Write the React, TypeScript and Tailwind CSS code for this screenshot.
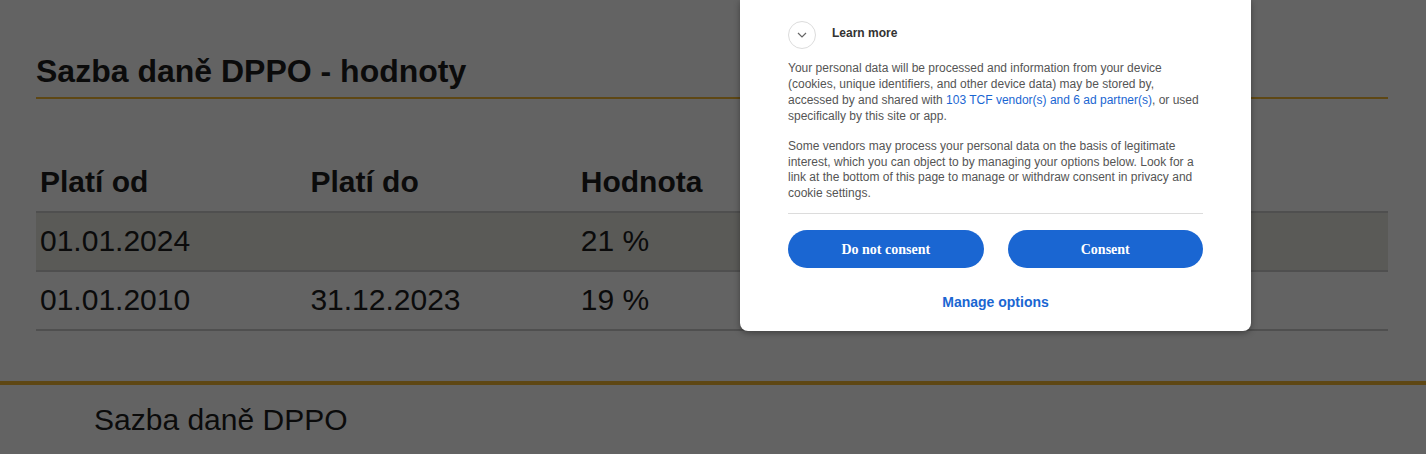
import React from "react";

const rows = [
  { od: "01.01.2024", do: "", val: "21 %", shaded: true },
  { od: "01.01.2010", do: "31.12.2023", val: "19 %", shaded: false },
];

export default function App() {
  return (
    <div
      className="relative w-[1426px] h-[454px] overflow-hidden bg-[#636363] text-[#0b0b0b]"
      style={{ fontFamily: '"Liberation Sans", Arial, sans-serif' }}
    >
      <div className="pl-[36px] pr-[38px] pt-[53px]">
        <h2 className="text-[32px] font-bold leading-[37px] pb-[7px] border-b-2 border-[#5e4714]">
          Sazba daně DPPO - hodnoty
        </h2>
        <div className="mt-[61px]">
          <div className="grid grid-cols-5 h-[53px] border-b-2 border-[#4f4f4f] text-[30px] font-bold leading-[34px]">
            <div className="pl-[4px] pt-[5px]">Platí od</div>
            <div className="pl-[4px] pt-[5px]">Platí do</div>
            <div className="pl-[4px] pt-[5px]">Hodnota</div>
            <div />
            <div />
          </div>
          {rows.map((r, i) => (
            <div
              key={i}
              className={`grid grid-cols-5 h-[59px] border-b-2 border-[#4f4f4f] text-[30px] leading-[34px] ${
                r.shaded ? "bg-[#5a5a57]" : ""
              }`}
            >
              <div className="pl-[4px] pt-[11px]">{r.od}</div>
              <div className="pl-[4px] pt-[11px]">{r.do}</div>
              <div className="pl-[4px] pt-[11px]">{r.val}</div>
              <div />
              <div />
            </div>
          ))}
        </div>
      </div>
      <div className="mt-[50px] border-t-[4px] border-[#5e4714] pl-[94px] pt-[18px] text-[30px] leading-[34px]">
        Sazba daně DPPO
      </div>

      {/* consent dialog */}
      <div className="absolute left-[740px] top-0 w-[511px] h-[331px] bg-white rounded-b-[8px] shadow-[0_2px_6px_rgba(0,0,0,0.35)] px-[48px] pt-[20px]">
        <div className="flex items-center h-[29px]">
          <div className="w-[28px] h-[28px] rounded-full border border-[#dcdcdc] flex items-center justify-center">
            <svg width="10" height="6" viewBox="0 0 10 6" fill="none">
              <path d="M1 1l4 4 4-4" stroke="#666" strokeWidth="1.2" />
            </svg>
          </div>
          <span className="ml-[16px] text-[12px] font-bold text-[#333] -mt-[3px]">Learn more</span>
        </div>
        <p className="mt-[11px] text-[12px] leading-[16px] text-[#555]">
          Your personal data will be processed and information from your device (cookies, unique identifiers, and other device data) may be stored by, accessed by and shared with{" "}
          <span className="text-[#1a66d2]">103 TCF vendor(s) and 6 ad partner(s)</span>, or used specifically by this site or app.
        </p>
        <p className="mt-[15px] text-[12px] leading-[15.5px] text-[#555]">
          Some vendors may process your personal data on the basis of legitimate interest, which you can object to by managing your options below. Look for a link at the bottom of this page to manage or withdraw consent in privacy and cookie settings.
        </p>
        <div className="mt-[12px] border-t border-[#dcdcdc]" />
        <div className="mt-[16px] flex gap-[24px]">
          <button
            className="flex-1 h-[38px] rounded-full bg-[#1a66d2] text-white text-[14px] font-bold"
            style={{ fontFamily: '"Liberation Serif", "Times New Roman", serif' }}
          >
            Do not consent
          </button>
          <button
            className="flex-1 h-[38px] rounded-full bg-[#1a66d2] text-white text-[14px] font-bold"
            style={{ fontFamily: '"Liberation Serif", "Times New Roman", serif' }}
          >
            Consent
          </button>
        </div>
        <div className="mt-[24px] text-center text-[14px] font-bold text-[#1a66d2]">Manage options</div>
      </div>
    </div>
  );
}
